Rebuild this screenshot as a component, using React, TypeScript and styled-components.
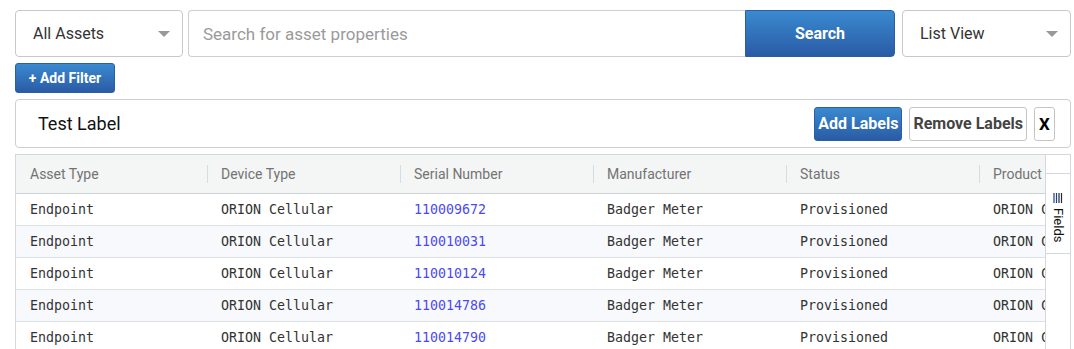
import React from 'react';
import styled, { createGlobalStyle } from 'styled-components';

const GlobalStyle = createGlobalStyle`
  html, body {
    margin: 0;
    padding: 0;
    background: #fff;
    font-family: Roboto, 'Liberation Sans', sans-serif;
    overflow: hidden;
  }
`;

const Page = styled.div`
  padding: 10px 3px 0 15px;
  display: flex;
  flex-direction: column;
  gap: 6px;
`;

const TopBar = styled.div`
  display: flex;
  height: 47px;
`;

const Select = styled.div<{ $width: number; $gap?: number }>`
  box-sizing: border-box;
  width: ${({ $width }) => $width}px;
  margin-left: ${({ $gap }) => $gap ?? 0}px;
  border: 1px solid #c8c8c8;
  border-radius: 4px;
  display: flex;
  align-items: center;
  justify-content: space-between;
  padding: 0 12px 0 17px;
  font-size: 16px;
  color: #333;

  &::after {
    content: '';
    border-left: 6px solid transparent;
    border-right: 6px solid transparent;
    border-top: 6px solid #999;
  }
`;

const SearchInput = styled.div`
  box-sizing: border-box;
  flex: 0 0 557px;
  margin-left: 5px;
  border: 1px solid #cfcfcf;
  border-right: none;
  border-radius: 4px 0 0 4px;
  display: flex;
  align-items: center;
  padding-left: 14px;
  font-size: 17px;
  color: #9a9a9a;
`;

const Button = styled.button<{ $variant?: 'primary' | 'plain' }>`
  box-sizing: border-box;
  font-family: Roboto, 'Liberation Sans', sans-serif;
  font-weight: 700;
  border-radius: 3px;
  cursor: pointer;
  padding: 0 4px;
  border: 1px solid ${({ $variant }) => ($variant === 'plain' ? '#c4c4c4' : '#2a5ea6')};
  color: ${({ $variant }) => ($variant === 'plain' ? '#444' : '#fff')};
  background: ${({ $variant }) =>
    $variant === 'plain' ? '#fff' : 'linear-gradient(#3a8ad0, #2a5ba5)'};
`;

const SearchButton = styled(Button)`
  width: 150px;
  font-size: 16px;
  border-radius: 0 4px 4px 0;
`;

const FilterRow = styled.div`
  display: flex;
`;

const AddFilter = styled(Button)`
  width: 100px;
  height: 30px;
  font-size: 14px;
`;

const LabelPanel = styled.div`
  box-sizing: border-box;
  height: 49px;
  border: 1px solid #cfcfcf;
  border-radius: 4px;
  display: flex;
  align-items: center;
  padding: 0 15px 0 22px;
  gap: 7px;
`;

const LabelName = styled.span`
  font-size: 18px;
  color: #111;
  flex: 1;
`;

const LabelButton = styled(Button)`
  height: 34px;
  font-size: 16px;
  padding: 0 3px;
`;

const CloseButton = styled(LabelButton)`
  width: 21px;
  padding: 0;
  color: #000;
  font-size: 17px;
`;

const Grid = styled.div`
  box-sizing: border-box;
  border: 1px solid #d4d8dc;
  border-bottom: none;
  display: flex;
  height: 200px;
  overflow: hidden;
`;

const Table = styled.div`
  flex: 1;
  overflow: hidden;
`;

const Row = styled.div<{ $header?: boolean; $alt?: boolean }>`
  box-sizing: border-box;
  display: flex;
  height: ${({ $header }) => ($header ? 39 : 32)}px;
  border-bottom: 1px solid ${({ $header }) => ($header ? '#cdd2d6' : '#dde2e8')};
  background: ${({ $header, $alt }) => ($header ? '#f4f5f5' : $alt ? '#f8f9fc' : '#fff')};
  white-space: nowrap;
`;

const Cell = styled.div<{ $header?: boolean; $link?: boolean; $first?: boolean }>`
  position: relative;
  flex: 0 0 ${({ $first }) => ($first ? 191 : 193)}px;
  box-sizing: border-box;
  padding-left: 14px;
  display: flex;
  align-items: center;
  overflow: hidden;
  font-family: ${({ $header }) =>
    $header ? "Roboto, 'Liberation Sans', sans-serif" : "'DejaVu Sans Mono', 'Liberation Mono', monospace"};
  font-size: ${({ $header }) => ($header ? 14 : 13.3)}px;
  color: ${({ $header, $link }) => ($header ? '#737373' : $link ? '#4a4af2' : '#333')};

  ${({ $header, $first }) =>
    $header && !$first
      ? `&::before {
    content: '';
    position: absolute;
    left: 0;
    top: 10px;
    height: 18px;
    border-left: 1px solid #d8dcdf;
  }`
      : ''}
`;

const SideBar = styled.div`
  flex: 0 0 24px;
  border-left: 1px solid #d4d8dc;
  background: #fff;
  padding-top: 18px;
`;

const FieldsTab = styled.div`
  height: 81px;
  border-top: 1px solid #d4d8dc;
  border-bottom: 1px solid #d4d8dc;
  display: flex;
  flex-direction: column;
  align-items: center;
  padding-top: 19px;
  box-sizing: border-box;
  gap: 5px;
`;

const FieldsText = styled.span`
  writing-mode: vertical-rl;
  font-size: 13px;
  color: #111;
  font-family: Roboto, 'Liberation Sans', sans-serif;
`;

const columns = ['Asset Type', 'Device Type', 'Serial Number', 'Manufacturer', 'Status', 'Product'];
const serials = ['110009672', '110010031', '110010124', '110014786', '110014790', '110014801'];

function App() {
  return (
    <>
      <GlobalStyle />
      <Page>
        <TopBar>
          <Select $width={168}>All Assets</Select>
          <SearchInput>Search for asset properties</SearchInput>
          <SearchButton>Search</SearchButton>
          <Select $width={169} $gap={7}>List View</Select>
        </TopBar>
        <FilterRow>
          <AddFilter>+ Add Filter</AddFilter>
        </FilterRow>
        <LabelPanel>
          <LabelName>Test Label</LabelName>
          <LabelButton>Add Labels</LabelButton>
          <LabelButton $variant="plain">Remove Labels</LabelButton>
          <CloseButton $variant="plain">X</CloseButton>
        </LabelPanel>
        <Grid>
          <Table>
            <Row $header>
              {columns.map((c, i) => (
                <Cell key={c} $header $first={i === 0}>
                  {c}
                </Cell>
              ))}
            </Row>
            {serials.map((s, i) => (
              <Row key={s} $alt={i % 2 === 1}>
                <Cell $first>Endpoint</Cell>
                <Cell>ORION Cellular</Cell>
                <Cell $link>{s}</Cell>
                <Cell>Badger Meter</Cell>
                <Cell>Provisioned</Cell>
                <Cell>ORION Cellular</Cell>
              </Row>
            ))}
          </Table>
          <SideBar>
            <FieldsTab>
              <svg width="10" height="10" viewBox="0 0 10 10">
                {[1, 3.5, 6, 8.5].map((x) => (
                  <rect key={x} x={x - 0.6} y="0" width="1.2" height="10" fill={x < 5 ? '#1c3f8a' : '#2b2b2b'} />
                ))}
              </svg>
              <FieldsText>Fields</FieldsText>
            </FieldsTab>
          </SideBar>
        </Grid>
      </Page>
    </>
  );
}

export default App;
